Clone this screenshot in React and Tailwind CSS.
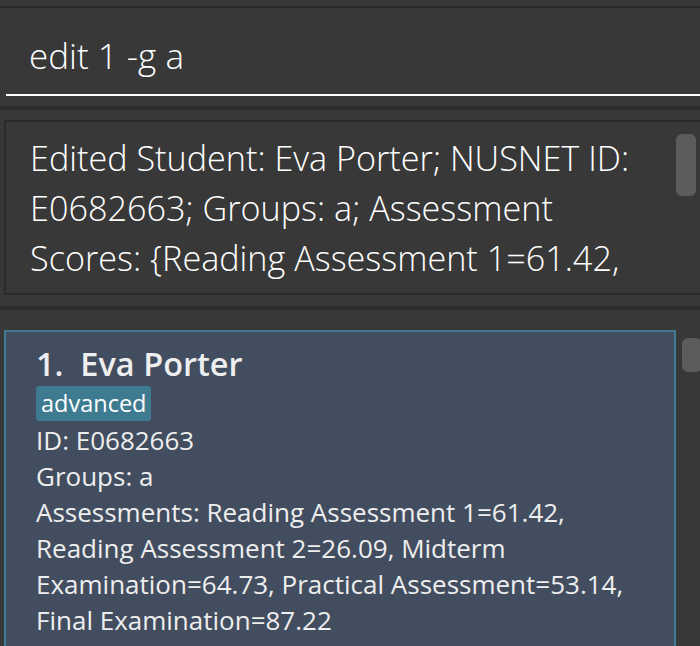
export default function App() {
  const font = { fontFamily: '"Open Sans", "Noto Sans", sans-serif' };
  return (
    <div className="w-[700px] h-[646px] overflow-hidden bg-[#383838] flex flex-col" style={font}>
      <div className="h-[6px] shrink-0 bg-[#383838]" />
      <div className="h-[2px] shrink-0 bg-[#2b2b2b]" />
      {/* command box */}
      <div className="h-[98px] shrink-0 bg-[#383838] flex flex-col pl-[6px]">
        <div className="h-[88px] border-b-2 border-white flex items-end pl-[23px] pb-[14px]">
          <span className="text-[35px] font-light text-white leading-[48px]">edit 1 -g a</span>
        </div>
      </div>
      <div className="h-[4px] shrink-0 bg-[#2b2b2b]" />
      {/* result display */}
      <div className="h-[196px] shrink-0 bg-[#383838] pl-[4px] pt-[10px] pb-[11px]">
        <div className="h-full border-2 border-r-0 border-[#2b2b2b] flex">
          <div className="flex-1 pl-[24px] pr-[20px] pt-[11px] text-[34.2px] font-light leading-[50px] text-white">
            <p>Edited Student: Eva Porter; NUSNET ID:</p>
            <p>E0682663; Groups: a; Assessment</p>
            <p>Scores: {"{"}Reading Assessment 1=61.42,</p>
          </div>
          <div className="w-[24px] shrink-0 pt-[12px] pr-[4px]">
            <div className="w-[20px] h-[62px] rounded-[6px] bg-[#5c5c5c]" />
          </div>
        </div>
      </div>
      <div className="h-[4px] shrink-0 bg-[#2b2b2b]" />
      {/* list */}
      <div className="flex-1 bg-[#383838] flex pt-[20px] pl-[4px]">
        <div className="w-[672px] shrink-0 border-2 border-b-0 border-[#3e7b91] bg-[#424d5f] pl-[30px] pr-[30px] pt-[10px] text-[#eeeeee]">
          <div className="text-[32.5px] font-semibold leading-[44px]">1.&nbsp;&nbsp;Eva Porter</div>
          <div className="inline-flex h-[35px] items-center rounded-[3px] bg-[#3e7b91] px-[5px] text-[23.5px] text-white">advanced</div>
          <div className="mt-[1px] text-[26px] leading-[36px]">
            <div>ID: E0682663</div>
            <div>Groups: a</div>
            <div>Assessments: Reading Assessment 1=61.42, Reading Assessment 2=26.09, Midterm Examination=64.73, Practical Assessment=53.14, Final Examination=87.22</div>
          </div>
        </div>
        <div className="pl-[6px] pt-[8px]">
          <div className="w-[20px] h-[34px] rounded-[6px] bg-[#5c5c5c]" />
        </div>
      </div>
    </div>
  );
}
